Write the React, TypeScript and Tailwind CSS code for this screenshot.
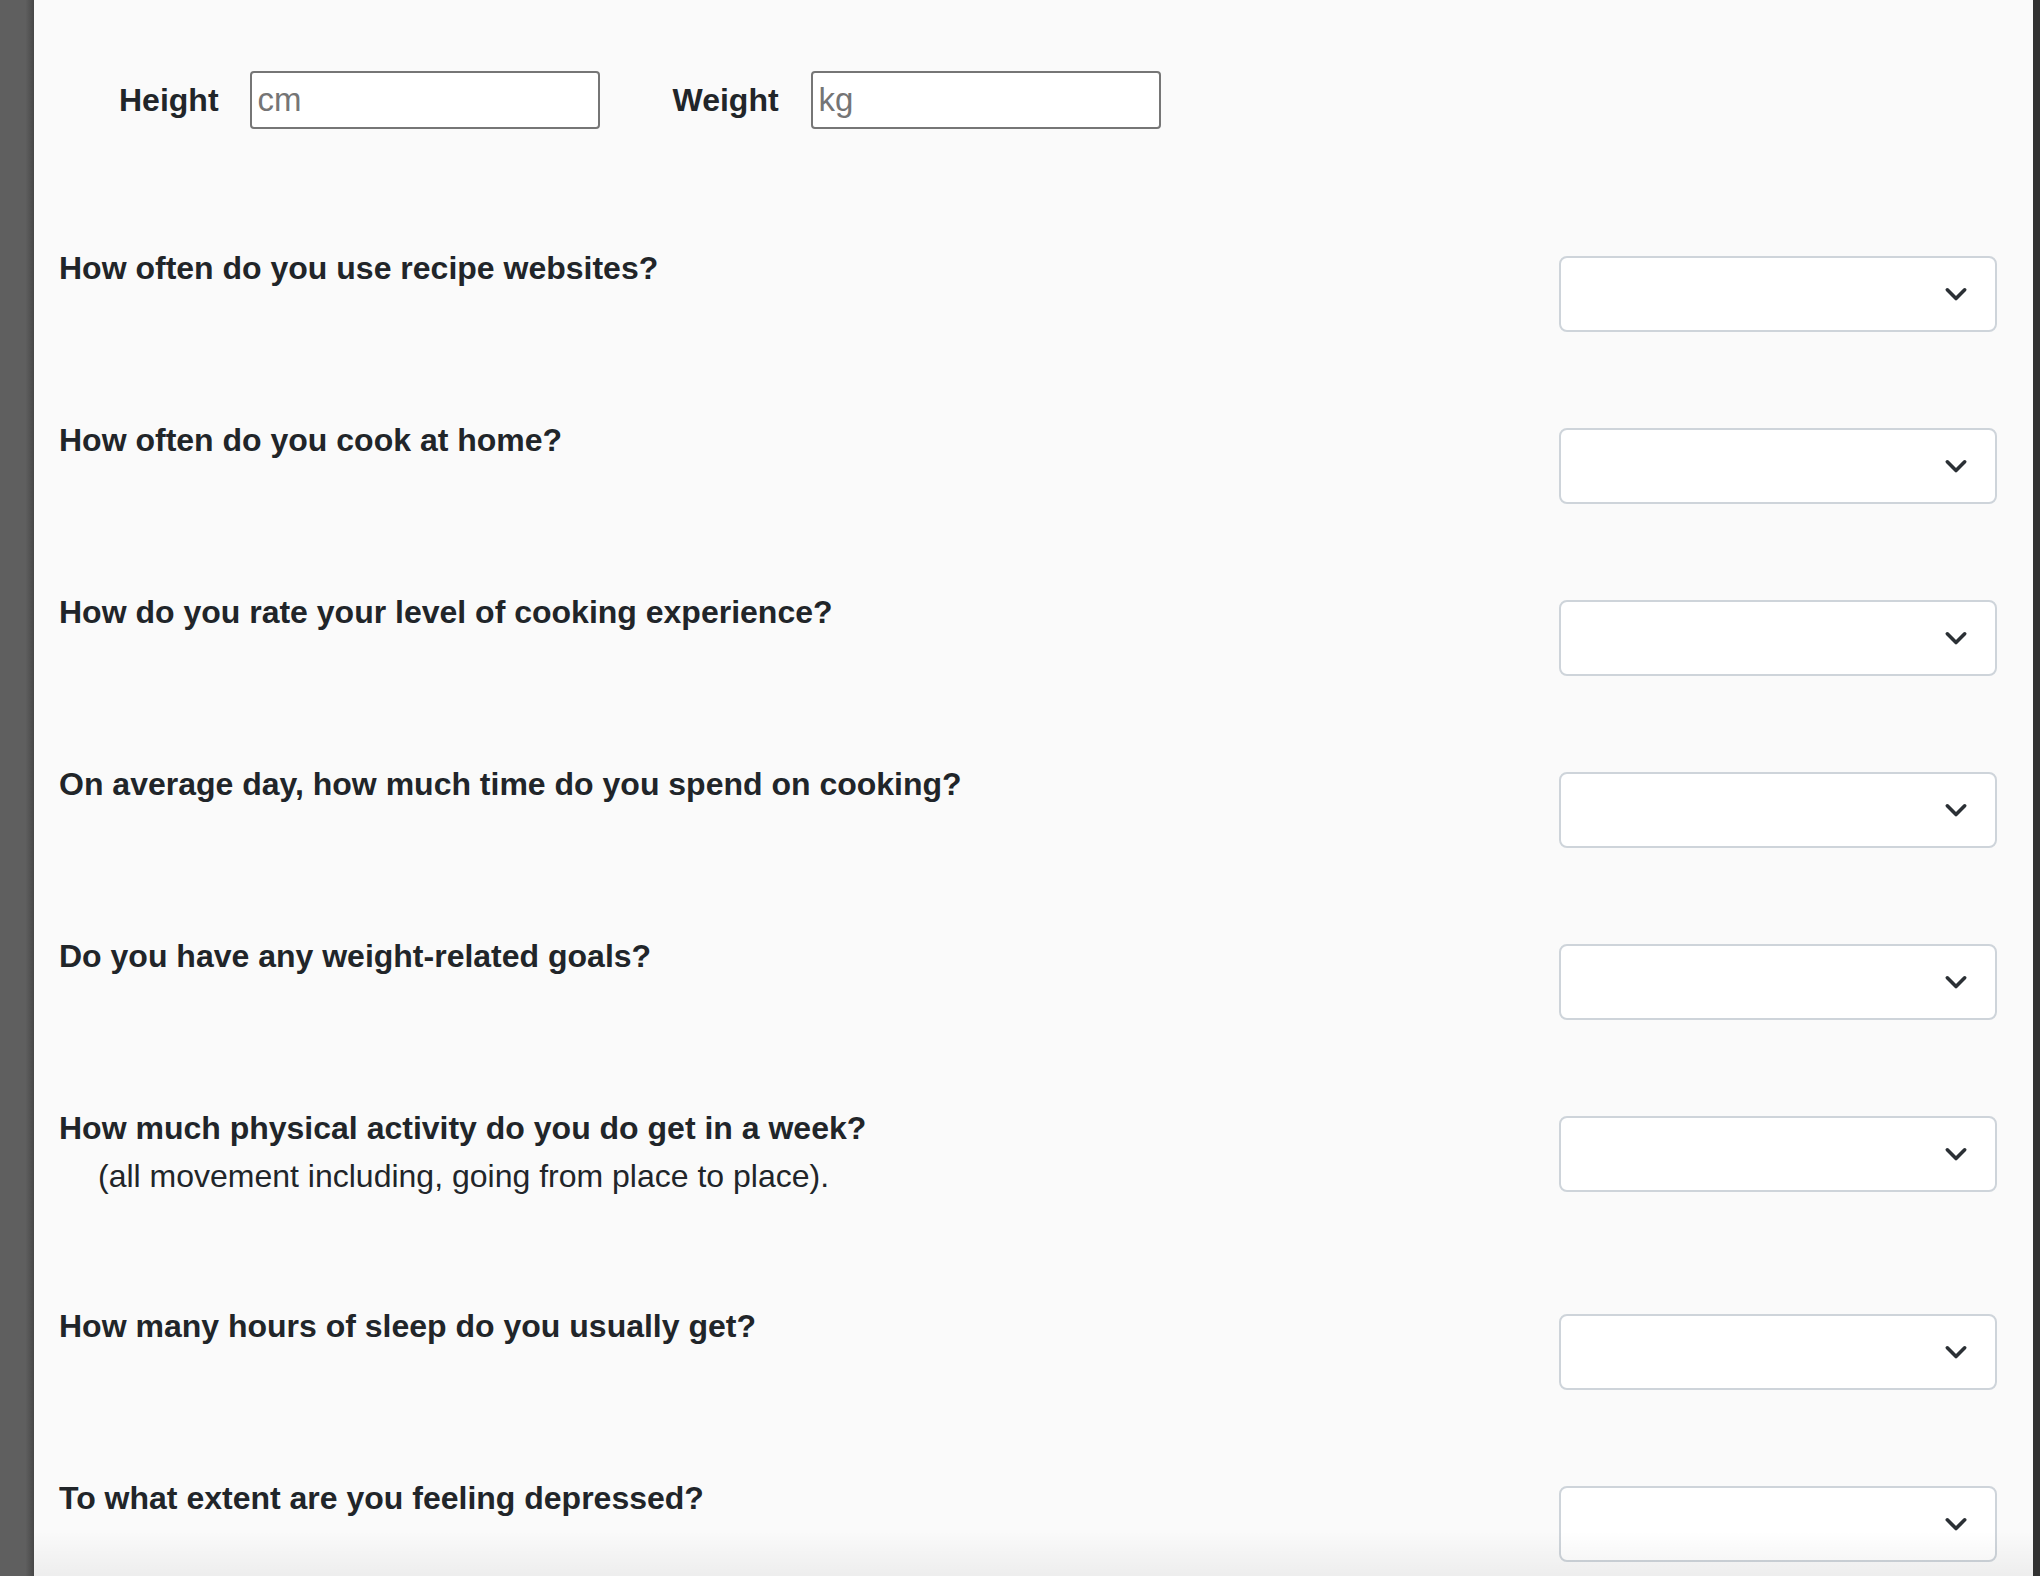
const questions: { text: string; note?: string }[] = [
  { text: "How often do you use recipe websites?" },
  { text: "How often do you cook at home?" },
  { text: "How do you rate your level of cooking experience?" },
  { text: "On average day, how much time do you spend on cooking?" },
  { text: "Do you have any weight-related goals?" },
  {
    text: "How much physical activity do you do get in a week?",
    note: "(all movement including, going from place to place).",
  },
  { text: "How many hours of sleep do you usually get?" },
  { text: "To what extent are you feeling depressed?" },
];

function SelectBox() {
  return (
    <div className="mt-[12px] flex h-[76px] w-[438px] shrink-0 items-center justify-end rounded-[8px] border-2 border-[#ced4da] bg-white pr-[27px]">
      <svg viewBox="0 0 16 16" className="h-6 w-6" fill="none">
        <path
          d="m2.2 5.2 5.8 5.8 5.8-5.8"
          stroke="#2b3035"
          strokeWidth="2.4"
          strokeLinecap="round"
          strokeLinejoin="round"
        />
      </svg>
    </div>
  );
}

function QuestionRow({ text, note }: { text: string; note?: string }) {
  return (
    <div className={`flex items-start justify-between ${note ? "mb-[18px]" : ""}`}>
      <div className="text-[32px] leading-[48px]">
        <div className="font-bold">{text}</div>
        {note && <div className="pl-[39px]">{note}</div>}
      </div>
      <SelectBox />
    </div>
  );
}

export default function App() {
  return (
    <div className="flex h-[1576px] w-[2040px] overflow-hidden bg-[#fafafa] font-['Liberation_Sans',Arial,sans-serif] text-[#212529]">
      <div className="w-[34px] shrink-0 bg-[linear-gradient(to_right,#5f5f5f_75%,#474747)]" />

      <main className="relative flex flex-1 flex-col">
        <div className="mt-[71px] flex items-center pl-[85px]">
          <label className="text-[32px] font-bold leading-[48px]">Height</label>
          <input
            type="text"
            placeholder="cm"
            className="ml-[31px] h-[58px] w-[350px] rounded-[4px] border-2 border-[#767676] bg-white px-[6px] text-[33px] outline-none placeholder:text-[#757575]"
          />
          <label className="ml-[73px] text-[32px] font-bold leading-[48px]">Weight</label>
          <input
            type="text"
            placeholder="kg"
            className="ml-[32px] h-[58px] w-[350px] rounded-[4px] border-2 border-[#767676] bg-white px-[6px] text-[33px] outline-none placeholder:text-[#757575]"
          />
        </div>

        <div className="mt-[115px] flex flex-col gap-[84px] pl-[25px] pr-[36px]">
          {questions.map((q) => (
            <QuestionRow key={q.text} text={q.text} note={q.note} />
          ))}
        </div>

        {/* scroll shadow at the bottom */}
        <div className="pointer-events-none absolute inset-x-0 bottom-0 h-[45px] bg-gradient-to-b from-transparent to-black/[0.05]" />
      </main>

      <div className="w-[7px] shrink-0 bg-[#323232]" />
    </div>
  );
}
